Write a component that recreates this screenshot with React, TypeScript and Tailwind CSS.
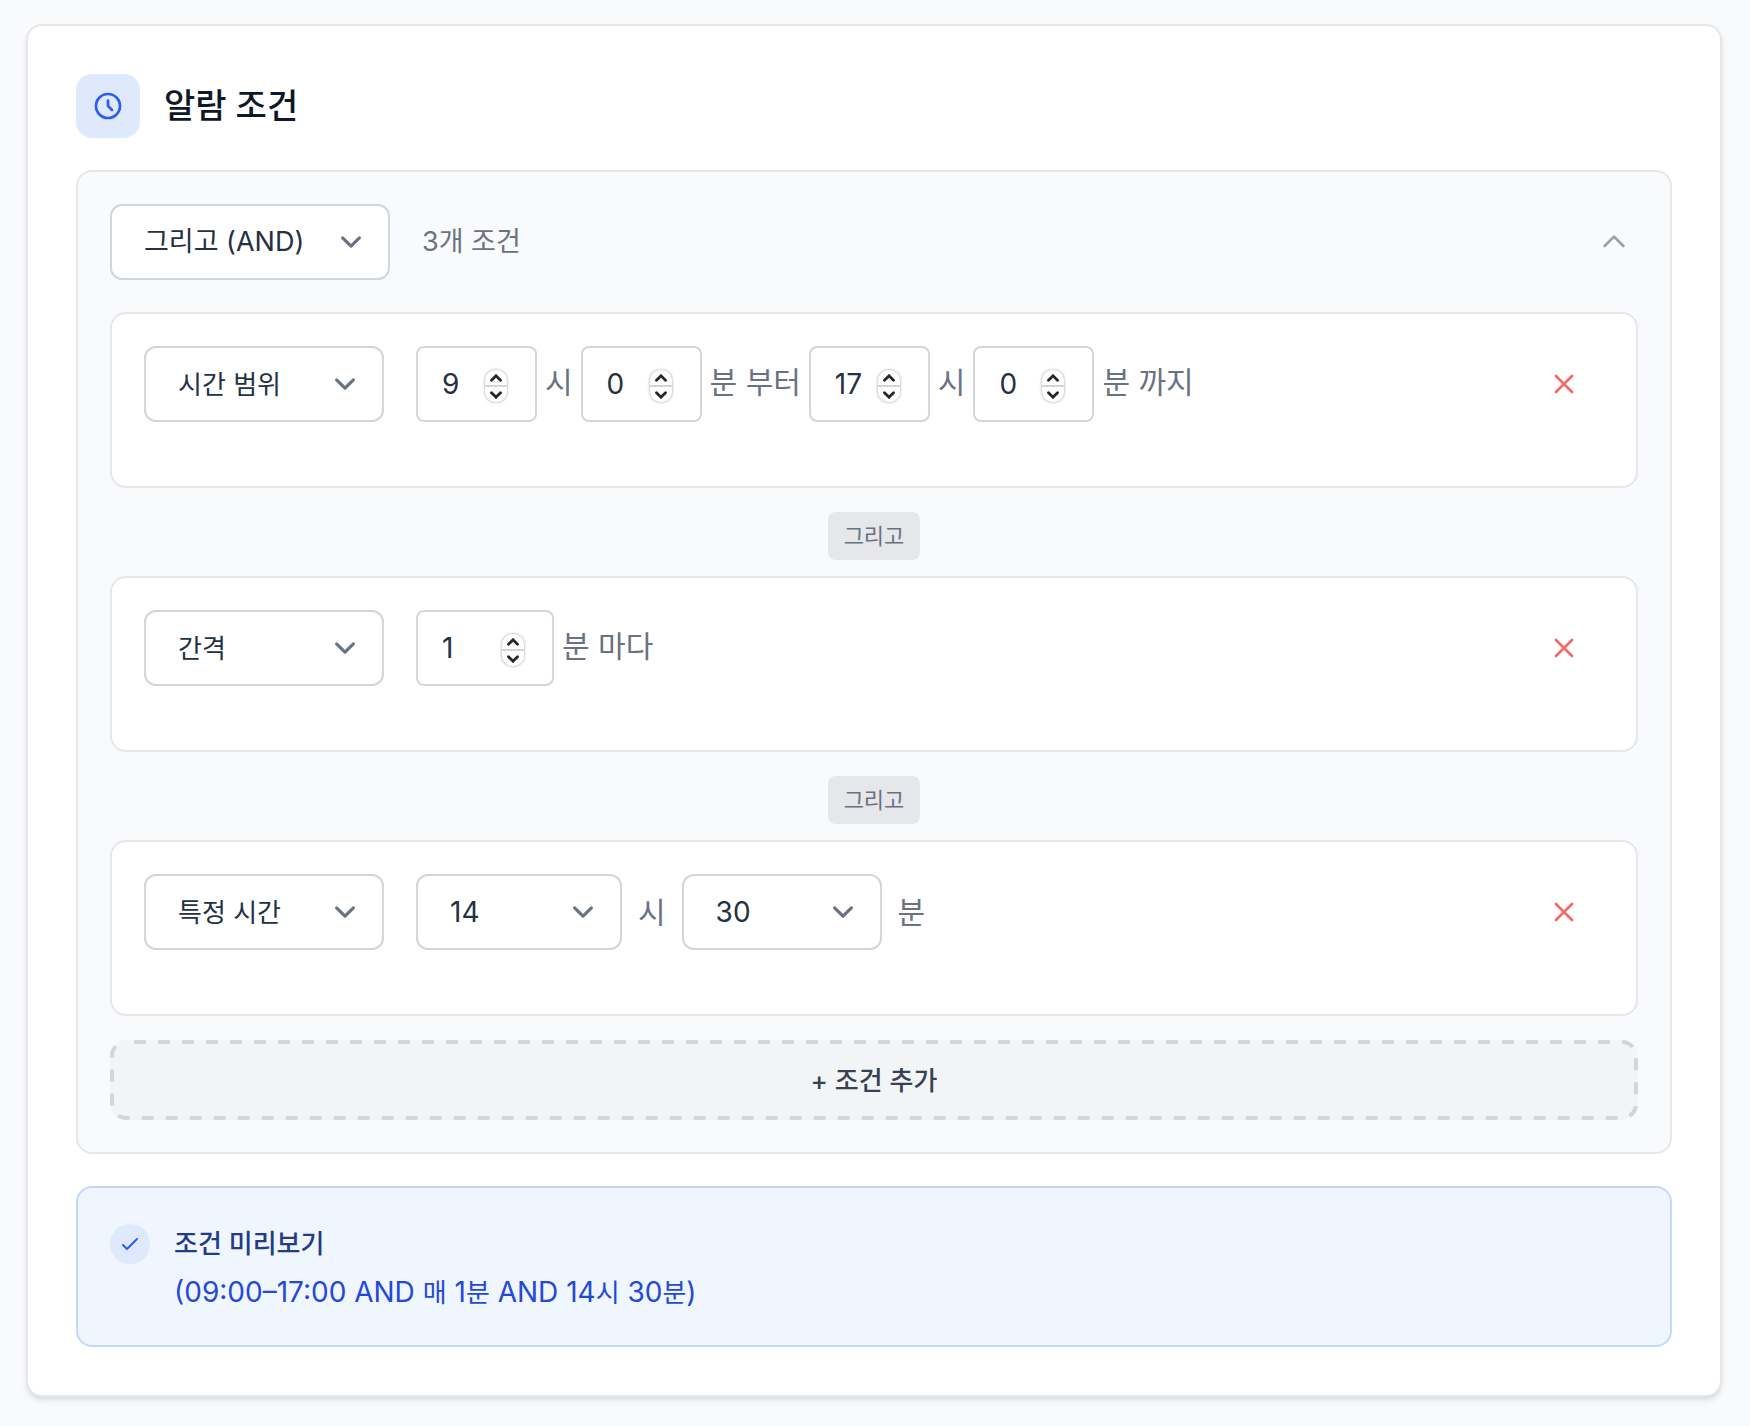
import React, { useState } from "react";

const LABEL = "text-[30px] leading-12 text-gray-500";

const CLOCK = "M12 8v4l3 3m6-3a9 9 0 11-18 0 9 9 0 0118 0z";
const CROSS = "M6 18L18 6M6 6l12 12";
const CHEVRON_UP = "M5 15l7-7 7 7";
const CHECK = "M5 13l4 4L19 7";

const Icon = ({ d, className }: { d: string; className: string }) => (
  <svg
    className={className}
    fill="none"
    stroke="currentColor"
    viewBox="0 0 24 24"
    aria-hidden="true"
  >
    <path strokeLinecap="round" strokeLinejoin="round" strokeWidth={2} d={d} />
  </svg>
);

interface SelectProps {
  label: string;
  options: string[];
  value: string;
  className: string;
}

const Select = ({ label, options, value, className }: SelectProps) => {
  const [selected, setSelected] = useState(value);

  return (
    <div className={`relative h-19 ${className}`}>
      <select
        aria-label={label}
        value={selected}
        onChange={(e) => setSelected(e.target.value)}
        className="h-full w-full appearance-none rounded-xl border-2 border-gray-300 bg-white pr-16 pl-8 text-[#233142]"
      >
        {options.map((option) => (
          <option key={option}>{option}</option>
        ))}
      </select>
      <svg
        className="pointer-events-none absolute inset-y-0 right-[18px] my-auto size-[42px] text-gray-500"
        fill="none"
        stroke="currentColor"
        viewBox="0 0 20 20"
        aria-hidden="true"
      >
        <path
          strokeLinecap="round"
          strokeLinejoin="round"
          strokeWidth={1.5}
          d="M6 8l4 4 4-4"
        />
      </svg>
    </div>
  );
};

interface NumberInputProps {
  label: string;
  value: number;
  max: number;
  className: string;
}

const NumberInput = ({ label, value, max, className }: NumberInputProps) => {
  const [current, setCurrent] = useState(value);
  const step = (by: number) =>
    setCurrent((prev) => Math.min(max, Math.max(0, prev + by)));

  return (
    <div
      className={`flex h-19 items-center rounded-lg border-2 border-gray-300 bg-white pr-7 pl-6 ${className}`}
    >
      <input
        type="number"
        aria-label={label}
        min={0}
        max={max}
        value={current}
        onChange={(e) => setCurrent(Number(e.target.value))}
        className="w-full min-w-0 flex-1 [appearance:textfield] text-[28px] text-[#233142] outline-none [&::-webkit-inner-spin-button]:appearance-none"
      />
      <div className="mt-1 flex h-8 w-[22px] shrink-0 flex-col divide-y-2 divide-neutral-300 rounded-[10px] bg-white shadow-[0_0_3px_rgba(0,0,0,0.4)]">
        <button
          type="button"
          aria-label={`${label} 증가`}
          onClick={() => step(1)}
          className="flex flex-1 items-center justify-center"
        >
          <svg className="h-2 w-3" viewBox="0 0 12 8" fill="none">
            <path
              d="M1.5 6.2L6 1.8l4.5 4.4"
              stroke="#262626"
              strokeWidth="2.8"
              strokeLinecap="round"
            />
          </svg>
        </button>
        <button
          type="button"
          aria-label={`${label} 감소`}
          onClick={() => step(-1)}
          className="flex flex-1 items-center justify-center"
        >
          <svg className="h-2 w-3" viewBox="0 0 12 8" fill="none">
            <path
              d="M1.5 1.8L6 6.2l4.5-4.4"
              stroke="#262626"
              strokeWidth="2.8"
              strokeLinecap="round"
            />
          </svg>
        </button>
      </div>
    </div>
  );
};

const KINDS = ["시간 범위", "간격", "특정 시간"];
const HOURS = Array.from({ length: 24 }, (_, i) => String(i));
const MINUTES = Array.from({ length: 60 }, (_, i) => String(i));

const Condition = ({
  kind,
  children,
}: {
  kind: string;
  children: React.ReactNode;
}) => (
  <div className="flex items-center justify-between rounded-2xl border-2 border-gray-200 bg-white p-8 pb-16">
    <div className="flex items-center gap-8">
      <Select
        label="조건 종류"
        options={KINDS}
        value={kind}
        className="w-60 text-[26px]"
      />
      {children}
    </div>
    <button
      type="button"
      aria-label="조건 삭제"
      className="px-6 py-4 text-[#f06c68]"
    >
      <Icon d={CROSS} className="size-8" />
    </button>
  </div>
);

const Joiner = () => (
  <div className="flex justify-center pt-6 pb-4">
    <span className="rounded-lg bg-gray-200 px-4 py-2 text-[22px] leading-8 text-gray-500">
      그리고
    </span>
  </div>
);

export default function App() {
  const [open, setOpen] = useState(true);

  return (
    <div className="min-h-screen bg-gray-50 py-6 pr-7 pl-[26px] font-[Inter,'Noto_Sans_CJK_KR',sans-serif]">
      <section className="rounded-2xl border-2 border-gray-200 bg-white p-12 shadow-md">
        <header className="mb-8 flex items-center gap-6">
          <div className="flex size-16 items-center justify-center rounded-2xl bg-[#dfe9fc] text-[#2c5cf2]">
            <Icon d={CLOCK} className="size-8" />
          </div>
          <h3 className="text-[34px] leading-14 font-medium text-gray-900">
            알람 조건
          </h3>
        </header>

        <div className="rounded-2xl border-2 border-gray-200 bg-gray-50 p-8">
          <div className="mb-8 flex items-center justify-between">
            <div className="flex items-center gap-8">
              <Select
                label="논리 연산자"
                options={["그리고 (AND)", "또는 (OR)"]}
                value="그리고 (AND)"
                className="w-70 text-[27px]"
              />
              <span className="text-[27px] text-gray-500">3개 조건</span>
            </div>
            <button
              type="button"
              aria-label="접기"
              aria-expanded={open}
              onClick={() => setOpen(!open)}
              className="p-2 text-gray-400"
            >
              <Icon d={CHEVRON_UP} className="size-8" />
            </button>
          </div>

          {open && (
            <>
              <Condition kind="시간 범위">
                <div className="flex items-center gap-2">
                  <NumberInput label="시작 시" value={9} max={23} className="w-[121px]" />
                  <span className={`${LABEL} pb-1`}>시</span>
                  <NumberInput label="시작 분" value={0} max={59} className="w-[121px]" />
                  <span className={`${LABEL} pb-1`}>분 부터</span>
                  <NumberInput label="종료 시" value={17} max={23} className="w-[121px]" />
                  <span className={`${LABEL} pb-1`}>시</span>
                  <NumberInput label="종료 분" value={0} max={59} className="w-[121px]" />
                  <span className={`${LABEL} pb-1`}>분 까지</span>
                </div>
              </Condition>
              <Joiner />
              <Condition kind="간격">
                <div className="flex items-center gap-2">
                  <NumberInput label="간격 (분)" value={1} max={999} className="w-[138px]" />
                  <span className={`${LABEL} pb-1`}>분 마다</span>
                </div>
              </Condition>
              <Joiner />
              <Condition kind="특정 시간">
                <div className="flex items-center gap-4">
                  <Select label="시" options={HOURS} value="14" className="w-[206px] text-[28px]" />
                  <span className={LABEL}>시</span>
                  <Select label="분" options={MINUTES} value="30" className="w-50 text-[28px]" />
                  <span className={LABEL}>분</span>
                </div>
              </Condition>
            </>
          )}

          <button
            type="button"
            className="relative mt-6 h-20 w-full rounded-2xl bg-gray-100 text-[26px] font-medium text-gray-700"
          >
            {/* border-dashed packs the dashes too tightly, so the outline is drawn */}
            <svg
              className="pointer-events-none absolute inset-0 size-full text-gray-300"
              fill="none"
              aria-hidden="true"
            >
              <rect
                className="h-[calc(100%-4px)] w-[calc(100%-4px)]"
                x="2"
                y="2"
                rx="14"
                stroke="currentColor"
                strokeWidth="4"
                strokeDasharray="12 12"
                strokeDashoffset="-8"
              />
            </svg>
            + 조건 추가
          </button>
        </div>

        <div className="mt-8 flex items-start gap-6 rounded-2xl border-2 border-[#c2d9fc] bg-[#eff6fe] p-8">
          <div className="mt-1 flex size-10 items-center justify-center rounded-full bg-[#dfe9fc] text-[#2c5cf2]">
            <Icon d={CHECK} className="size-6" />
          </div>
          <div>
            <h4 className="text-[26px] leading-12 font-medium text-[#243a8a]">
              조건 미리보기
            </h4>
            <p className="mt-1 text-[28px] leading-10 text-[#2447dc]">
              (09:00–17:00 AND <span className="text-[26px]">매</span> 1
              <span className="text-[26px]">분</span> AND 14
              <span className="text-[26px]">시</span> 30
              <span className="text-[26px]">분</span>)
            </p>
          </div>
        </div>
      </section>
    </div>
  );
}
